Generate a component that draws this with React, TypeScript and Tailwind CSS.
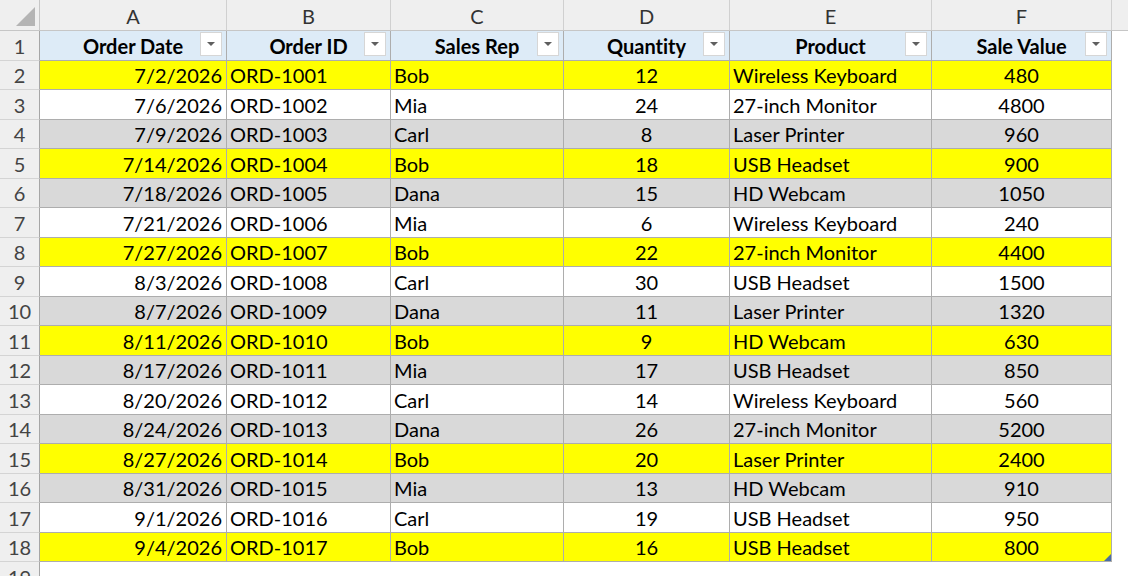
import React from "react";

type Fill = "y" | "w" | "g";

const rows: [string, string, string, number, string, number, Fill][] = [
  ["7/2/2026", "ORD-1001", "Bob", 12, "Wireless Keyboard", 480, "y"],
  ["7/6/2026", "ORD-1002", "Mia", 24, "27-inch Monitor", 4800, "w"],
  ["7/9/2026", "ORD-1003", "Carl", 8, "Laser Printer", 960, "g"],
  ["7/14/2026", "ORD-1004", "Bob", 18, "USB Headset", 900, "y"],
  ["7/18/2026", "ORD-1005", "Dana", 15, "HD Webcam", 1050, "g"],
  ["7/21/2026", "ORD-1006", "Mia", 6, "Wireless Keyboard", 240, "w"],
  ["7/27/2026", "ORD-1007", "Bob", 22, "27-inch Monitor", 4400, "y"],
  ["8/3/2026", "ORD-1008", "Carl", 30, "USB Headset", 1500, "w"],
  ["8/7/2026", "ORD-1009", "Dana", 11, "Laser Printer", 1320, "g"],
  ["8/11/2026", "ORD-1010", "Bob", 9, "HD Webcam", 630, "y"],
  ["8/17/2026", "ORD-1011", "Mia", 17, "USB Headset", 850, "g"],
  ["8/20/2026", "ORD-1012", "Carl", 14, "Wireless Keyboard", 560, "w"],
  ["8/24/2026", "ORD-1013", "Dana", 26, "27-inch Monitor", 5200, "g"],
  ["8/27/2026", "ORD-1014", "Bob", 20, "Laser Printer", 2400, "y"],
  ["8/31/2026", "ORD-1015", "Mia", 13, "HD Webcam", 910, "g"],
  ["9/1/2026", "ORD-1016", "Carl", 19, "USB Headset", 950, "w"],
  ["9/4/2026", "ORD-1017", "Bob", 16, "USB Headset", 800, "y"],
];

const fills: Record<Fill, string> = {
  y: "bg-[#ffff00]",
  w: "bg-white",
  g: "bg-[#d9d9d9]",
};

const cols = [
  { letter: "A", title: "Order Date", w: "w-[187px]", align: "justify-end pr-[4px]" },
  { letter: "B", title: "Order ID", w: "w-[164px]", align: "justify-start pl-[3px]" },
  { letter: "C", title: "Sales Rep", w: "w-[173px]", align: "justify-start pl-[3px]" },
  { letter: "D", title: "Quantity", w: "w-[166px]", align: "justify-center" },
  { letter: "E", title: "Product", w: "w-[202px]", align: "justify-start pl-[3px]" },
  { letter: "F", title: "Sale Value", w: "w-[180px]", align: "justify-center" },
];

const FilterButton = () => (
  <span className="absolute right-[4px] top-[1px] w-[22px] h-[24px] bg-white border border-[#d6d6d6] flex items-center justify-center">
    <svg width="8" height="4" viewBox="0 0 8 4">
      <polygon points="0,0 8,0 4,4" fill="#5f5f5f" />
    </svg>
  </span>
);

const RowNum = ({ n }: { n: number }) => (
  <div className="w-[40px] shrink-0 h-full pt-[1px] bg-[#efefef] border-r border-b border-r-[#a6a6a6] border-b-[#d4d4d4] flex items-center justify-center text-[#444] text-[20px]">
    {n}
  </div>
);

export default function App() {
  return (
    <div
      className="w-[1128px] h-[576px] overflow-hidden bg-white text-black flex flex-col [font-variant-ligatures:none]"
      style={{ fontFamily: "Lato, 'Noto Sans', sans-serif" }}
    >
      {/* Column letters */}
      <div className="flex h-[31px] shrink-0 bg-[#efefef] border-b border-[#c6c6c6]">
        <div className="w-[40px] shrink-0 border-r border-[#c6c6c6] relative">
          <svg className="absolute left-0 top-0" width="40" height="30" viewBox="0 0 40 30">
            <polygon points="35,7 35,26 16,26" fill="#b4b4b4" />
          </svg>
        </div>
        {cols.map((c) => (
          <div
            key={c.letter}
            className={`${c.w} shrink-0 pt-[1px] border-r border-[#d0d0d0] flex items-center justify-center text-[20px] text-[#333]`}
          >
            {c.letter}
          </div>
        ))}
        <div className="flex-1" />
      </div>

      {/* Table header row */}
      <div className="flex h-[29.5px] shrink-0">
        <RowNum n={1} />
        {cols.map((c) => (
          <div
            key={c.title}
            className={`${c.w} shrink-0 relative pt-[1px] bg-[#ddebf7] border-r border-b border-[#adadad] flex items-center justify-center font-bold text-[20px]`}
          >
            {c.title}
            <FilterButton />
          </div>
        ))}
        <div className="flex-1" />
      </div>

      {/* Data rows */}
      {rows.map((r, i) => {
        const vals = [r[0], r[1], r[2], String(r[3]), r[4], String(r[5])];
        const last = i === rows.length - 1;
        return (
          <div key={r[1]} className="flex h-[29.5px] shrink-0">
            <RowNum n={i + 2} />
            {cols.map((c, j) => (
              <div
                key={c.letter}
                className={`${c.w} shrink-0 relative pt-[1px] ${fills[r[6]]} border-r border-b border-[#adadad] flex items-center ${c.align} text-[20px] whitespace-nowrap`}
              >
                {vals[j]}
                {last && j === 5 && (
                  <svg className="absolute right-0 bottom-0" width="7" height="7" viewBox="0 0 7 7">
                    <polygon points="7,0 7,7 0,7" fill="#4b6ea3" />
                  </svg>
                )}
              </div>
            ))}
            <div className="flex-1" />
          </div>
        );
      })}

      {/* Row 19 (partially visible) */}
      <div className="flex h-[29.5px] shrink-0">
        <RowNum n={19} />
        <div className="flex-1" />
      </div>
    </div>
  );
}
